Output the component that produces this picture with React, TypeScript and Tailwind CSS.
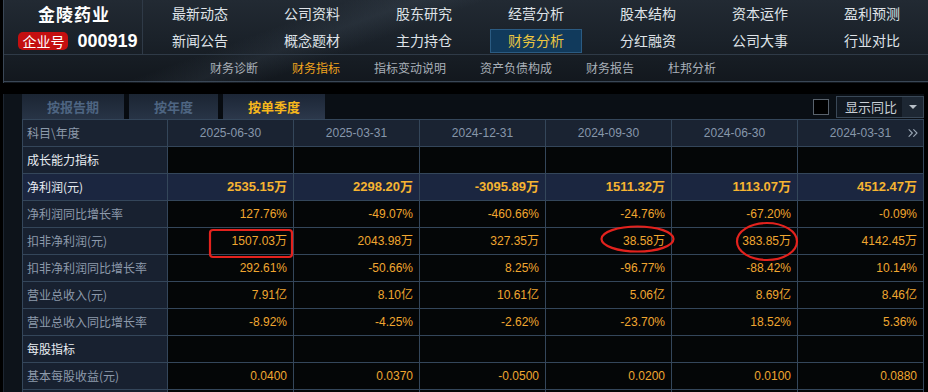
import { ChevronsRight } from 'lucide-react';

const topRow = ['最新动态', '公司资料', '股东研究', '经营分析', '股本结构', '资本运作', '盈利预测'];
const bottomRow = ['新闻公告', '概念题材', '主力持仓', '财务分析', '分红融资', '公司大事', '行业对比'];
const subNav = ['财务诊断', '财务指标', '指标变动说明', '资产负债构成', '财务报告', '杜邦分析'];
const dates = ['2025-06-30', '2025-03-31', '2024-12-31', '2024-09-30', '2024-06-30', '2024-03-31'];

type Row = { label: string; kind: 'section' | 'bold' | 'normal'; values?: string[] };

const rows: Row[] = [
    { label: '成长能力指标', kind: 'section' },
    { label: '净利润(元)', kind: 'bold', values: ['2535.15万', '2298.20万', '-3095.89万', '1511.32万', '1113.07万', '4512.47万'] },
    { label: '净利润同比增长率', kind: 'normal', values: ['127.76%', '-49.07%', '-460.66%', '-24.76%', '-67.20%', '-0.09%'] },
    { label: '扣非净利润(元)', kind: 'normal', values: ['1507.03万', '2043.98万', '327.35万', '38.58万', '383.85万', '4142.45万'] },
    { label: '扣非净利润同比增长率', kind: 'normal', values: ['292.61%', '-50.66%', '8.25%', '-96.77%', '-88.42%', '10.14%'] },
    { label: '营业总收入(元)', kind: 'normal', values: ['7.91亿', '8.10亿', '10.61亿', '5.06亿', '8.69亿', '8.46亿'] },
    { label: '营业总收入同比增长率', kind: 'normal', values: ['-8.92%', '-4.25%', '-2.62%', '-23.70%', '18.52%', '5.36%'] },
    { label: '每股指标', kind: 'section' },
    { label: '基本每股收益(元)', kind: 'normal', values: ['0.0400', '0.0370', '-0.0500', '0.0200', '0.0100', '0.0880'] },
    // next row only peeks in at the bottom edge
    { label: '', kind: 'normal' },
];

const cjk = "font-['Noto_Sans_CJK_SC','Liberation_Sans',sans-serif]";
const num = "font-['Liberation_Sans','Noto_Sans_CJK_SC',sans-serif]";

export default function App() {
    return (
        <div className={`relative w-[928px] h-[392px] overflow-hidden bg-black ${cjk}`}>
            {/* header */}
            <div className="h-[83px] border-l border-[#3a4756] ml-[3px] bg-gradient-to-b from-[#222a33] via-[#1a2129] to-[#12171d] relative overflow-hidden">
                <div className="absolute inset-0 bg-[linear-gradient(160deg,transparent_30%,rgba(120,140,160,0.10)_36%,transparent_42%)] pointer-events-none" />
                <div className="relative flex h-[55px] border-b border-[#2f3a47]">
                    <div className="w-[143px] border-r border-[#2f3a47] flex flex-col items-center">
                        <div className="h-[27px] flex items-center text-[17px] font-bold text-white tracking-[1px] pl-[2px]">金陵药业</div>
                        <div className="h-[27px] flex items-center gap-[9px] pl-[10px]">
                            <span className="h-[18px] w-[50px] rounded-[5px] bg-[#c40f10] text-white text-[14px] leading-[18px] text-center">企业号</span>
                            <span className={`${num} text-[18px] font-bold text-white leading-none`}>000919</span>
                        </div>
                    </div>
                    <div className="grid grid-cols-[repeat(7,112px)] grid-rows-[27px_27px] ml-[1px]">
                        {topRow.map((t) => (
                            <div key={t} className="flex items-center justify-center text-[14px] text-[#dfe3e8]">{t}</div>
                        ))}
                        {bottomRow.map((t) => (
                            <div key={t} className="flex items-center justify-center">
                                {t === '财务分析' ? (
                                    <span className="w-[92px] h-[24px] flex items-center justify-center border border-[#2b5b82] bg-[#113a5c] text-[14px] text-[#ecc640]">{t}</span>
                                ) : (
                                    <span className="text-[14px] text-[#dfe3e8]">{t}</span>
                                )}
                            </div>
                        ))}
                    </div>
                </div>
                <div className="relative flex items-center h-[27px] border-b border-[#3a4756] pl-[206px] gap-[34px] text-[12px]">
                    {subNav.map((t) => (
                        <span key={t} className={t === '财务指标' ? 'text-[#f0a41e]' : 'text-[#a9b0b8]'}>{t}</span>
                    ))}
                </div>
            </div>

            {/* content */}
            <div className="flex mt-[11px]">
                <div className="w-[19px] ml-[3px] h-[300px] border-l border-[#1d2631] bg-[#0d131a]" />
                <div className="w-[902px]">
                    <div className="flex h-[25px] bg-[#0a0f15] items-stretch">
                        <div className="w-[102px] flex items-center justify-center bg-gradient-to-b from-[#1b2533] to-[#283446] text-[13px] font-bold text-[#4e6582]">按报告期</div>
                        <div className="w-[5px] bg-[#070b10]" />
                        <div className="w-[89px] flex items-center justify-center bg-gradient-to-b from-[#1b2533] to-[#283446] text-[13px] font-bold text-[#4e6582]">按年度</div>
                        <div className="w-[5px] bg-[#070b10]" />
                        <div className="w-[102px] flex items-center justify-center bg-gradient-to-b from-[#1c2636] to-[#2c384b] text-[13px] font-bold text-[#f7b81c]">按单季度</div>
                        <div className="flex-1 flex items-center justify-end gap-[7px]">
                            <span className="w-[16px] h-[16px] border border-[#59626c] bg-black" />
                            <div className="w-[88px] h-[22px] border border-[#3a4857] bg-[#111821] flex">
                                <span className="flex-1 flex items-center pl-[8px] text-[13px] text-[#c8ced5]">显示同比</span>
                                <span className="w-[21px] bg-[#1d2733] flex items-center justify-center">
                                    <span className="w-0 h-0 border-x-[4px] border-x-transparent border-t-[4px] border-t-[#b8c0c8]" />
                                </span>
                            </div>
                        </div>
                    </div>
                    <div className="border-t border-l border-[#34465a] w-[902px]">
                        <div className="grid grid-cols-[145px_repeat(6,126px)] h-[27px] bg-[#1a2332]">
                            <div className="border-r border-b border-[#34465a] flex items-center pl-[4px] text-[12px] text-[#8d9aab]">科目\年度</div>
                            {dates.map((d, i) => (
                                <div key={d} className={`relative border-r border-b border-[#34465a] flex items-center justify-center ${num} text-[12px] text-[#8797ab]`}>
                                    {d}
                                    {i === 5 && <ChevronsRight className="absolute right-[2px] w-[16px] h-[16px] text-[#9aa6b4]" strokeWidth={1.6} />}
                                </div>
                            ))}
                        </div>
                        {rows.map((r, ri) => (
                            <div key={ri} className={`grid grid-cols-[145px_repeat(6,126px)] h-[27px] ${r.kind === 'bold' ? 'bg-[#1b2640]' : 'bg-[#040607]'}`}>
                                <div className={`border-r border-b border-[#34465a] flex items-center pl-[4px] text-[12px] ${r.kind === 'bold' ? 'bg-[#1b2640]' : 'bg-[#182130]'} ${r.kind === 'normal' ? 'text-[#8d9aab]' : 'text-[#e8edf2]'}`}>
                                    {r.label}
                                </div>
                                {dates.map((d, i) => (
                                    <div
                                        key={d}
                                        className={`border-r border-b border-[#34465a] flex items-center justify-end pr-[6px] ${num} ${r.kind === 'bold' ? 'text-[13px] font-bold text-[#f6b431]' : 'text-[12px] text-[#f0a630]'}`}
                                    >
                                        {r.values?.[i]}
                                    </div>
                                ))}
                            </div>
                        ))}
                    </div>
                </div>
            </div>

            {/* red annotations */}
            <svg className="absolute inset-0 pointer-events-none" width="928" height="392">
                <rect x="210" y="230" width="82" height="27" rx="3" fill="none" stroke="#e3221d" strokeWidth="2.2" />
                <ellipse cx="637.5" cy="239" rx="36" ry="12.5" fill="none" stroke="#e3221d" strokeWidth="2.2" />
                <ellipse cx="767" cy="241.5" rx="30" ry="18.5" fill="none" stroke="#e3221d" strokeWidth="2.2" />
            </svg>
        </div>
    );
}
